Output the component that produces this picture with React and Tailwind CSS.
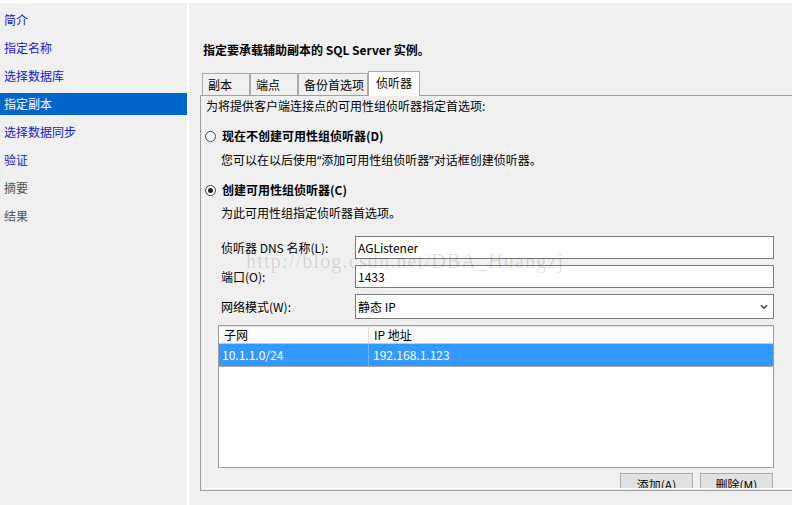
import React from "react";

const navItems = [
  { t: "简介", kind: "link" },
  { t: "指定名称", kind: "link" },
  { t: "选择数据库", kind: "link" },
  { t: "指定副本", kind: "sel" },
  { t: "选择数据同步", kind: "link" },
  { t: "验证", kind: "link" },
  { t: "摘要", kind: "gray" },
  { t: "结果", kind: "gray" },
];

function Radio({ checked }) {
  return (
    <span className="ml-[1px] w-[11px] h-[11px] rounded-full border border-[#3c3c3c] bg-white flex items-center justify-center shrink-0">
      {checked && <span className="w-[5px] h-[5px] rounded-full bg-[#222]" />}
    </span>
  );
}

export default function App() {
  return (
    <div className="relative w-[792px] h-[505px] overflow-hidden bg-[#f0f0f0] border-t-[3px] border-white text-black text-[12px] font-['Noto_Sans_CJK_SC','Noto_Sans',sans-serif]">
      <div className="flex h-full">
        {/* Sidebar */}
        <div className="w-[187px] shrink-0 flex flex-col gap-[6px] pt-[6px]">
          {navItems.map((it) => (
            <div
              key={it.t}
              className={
                "h-[22px] flex items-center pl-[4px] leading-none " +
                (it.kind === "sel"
                  ? "bg-[#0066cc] text-white"
                  : it.kind === "link"
                  ? "text-[#1515e0]"
                  : "text-[#555555]")
              }
            >
              {it.t}
            </div>
          ))}
        </div>
        <div className="w-[2px] shrink-0 bg-white" />

        {/* Main */}
        <div className="flex-1 flex flex-col pl-[11px] pt-[39px]">
          <div className="h-[16px] leading-[16px] pl-[3px] font-bold">
            指定要承载辅助副本的 SQL Server 实例。
          </div>

          {/* Tabs */}
          <div className="mt-[13px] h-[24px] flex items-end pl-[2px]">
            <div className="w-[48px] h-[22px] border-t border-l border-r border-[#acacac] bg-[#f0f0f0] pl-[5px] leading-[22px]">副本</div>
            <div className="w-[48px] h-[22px] border-t border-l border-r border-[#acacac] bg-[#f0f0f0] pl-[5px] leading-[22px]">端点</div>
            <div className="w-[70px] h-[22px] border-t border-l border-r border-[#acacac] bg-[#f0f0f0] pl-[5px] leading-[22px]">备份首选项</div>
            <div className="relative z-10 w-[52px] h-[25px] -mb-[1px] border-t border-l border-r border-[#acacac] bg-white pl-[7px] leading-[22px]">侦听器</div>
          </div>

          {/* Panel */}
          <div className="w-[600px] h-[396px] border-t border-l border-b border-[#a0a0a0] pt-[2px] pl-[2px] pb-[1px]">
            <div className="h-full border-l border-b border-white overflow-hidden flex flex-col">
              <div className="h-[16px] leading-[16px] pl-[2px]">为将提供客户端连接点的可用性组侦听器指定首选项:</div>

              <div className="mt-[14px] h-[16px] flex items-center">
                <Radio />
                <span className="ml-[6px] font-bold leading-[16px]">现在不创建可用性组侦听器(D)</span>
              </div>
              <div className="mt-[8px] h-[16px] leading-[16px] pl-[17px]">
                您可以在以后使用<span className="font-['Noto_Sans',sans-serif]">“</span>添加可用性组侦听器<span className="font-['Noto_Sans',sans-serif]">”</span>对话框创建侦听器。
              </div>

              <div className="mt-[14px] h-[16px] flex items-center">
                <Radio checked />
                <span className="ml-[6px] font-bold leading-[16px]">创建可用性组侦听器(C)</span>
              </div>
              <div className="mt-[7px] h-[16px] leading-[16px] pl-[17px]">为此可用性组指定侦听器首选项。</div>

              {/* Form */}
              <div className="ml-[14px] w-[556px] flex flex-col">
                <div className="mt-[15px] flex items-center h-[23px]">
                  <div className="w-[137px] pl-[3px]">侦听器 DNS 名称(L):</div>
                  <div className="w-[419px] h-[23px] border border-[#7a7a7a] bg-white pl-[2px] leading-[21px]">AGListener</div>
                </div>
                <div className="mt-[6px] flex items-center h-[23px]">
                  <div className="w-[137px] pl-[3px]">端口(O):</div>
                  <div className="w-[419px] h-[23px] border border-[#7a7a7a] bg-white pl-[2px] leading-[21px]">1433</div>
                </div>
                <div className="mt-[6px] flex items-center h-[25px]">
                  <div className="w-[137px] pl-[3px]">网络模式(W):</div>
                  <div className="w-[419px] h-[25px] border border-[#7a7a7a] bg-white pl-[2px] pr-[5px] flex items-center justify-between">
                    <span className="leading-[23px]">静态 IP</span>
                    <svg width="8" height="6" viewBox="0 0 8 6">
                      <path d="M1 1.2 L4 4.2 L7 1.2" fill="none" stroke="#444" strokeWidth="1.6" />
                    </svg>
                  </div>
                </div>

                {/* Table */}
                <div className="mt-[6px] h-[143px] border border-[#a0a0a0] bg-white flex flex-col">
                  <div className="h-[18px] flex border-t border-[#e6e6e6] border-b border-b-[#c8c8c8] bg-[#fbfbfb]">
                    <div className="w-[150px] pl-[5px] border-r border-[#e0e0e0] leading-[16px]">子网</div>
                    <div className="flex-1 pl-[5px] leading-[16px]">IP 地址</div>
                  </div>
                  <div className="h-[23px] flex bg-[#3399ff] text-white border-b border-[#a8a8a8]">
                    <div className="w-[150px] pl-[3px] border-r border-[#6fb5ff] leading-[22px]">10.1.1.0/24</div>
                    <div className="flex-1 pl-[4px] leading-[22px]">192.168.1.123</div>
                  </div>
                </div>

                {/* Buttons */}
                <div className="mt-[5px] flex justify-end gap-[7px] pr-[1px]">
                  <div className="w-[73px] h-[23px] border border-[#adadad] bg-[#e1e1e1] flex items-center justify-center">添加(A)</div>
                  <div className="w-[73px] h-[23px] border border-[#adadad] bg-[#e1e1e1] flex items-center justify-center">删除(M)</div>
                </div>
              </div>
            </div>
          </div>
        </div>
      </div>

      {/* Watermark */}
      <div className="absolute left-[246px] top-[248px] text-[20px] leading-[20px] tracking-[1.2px] font-['Liberation_Serif',serif] text-[rgba(0,0,0,0.13)] whitespace-nowrap pointer-events-none">
        http://blog.csdn.net/DBA_Huangzj
      </div>
    </div>
  );
}
